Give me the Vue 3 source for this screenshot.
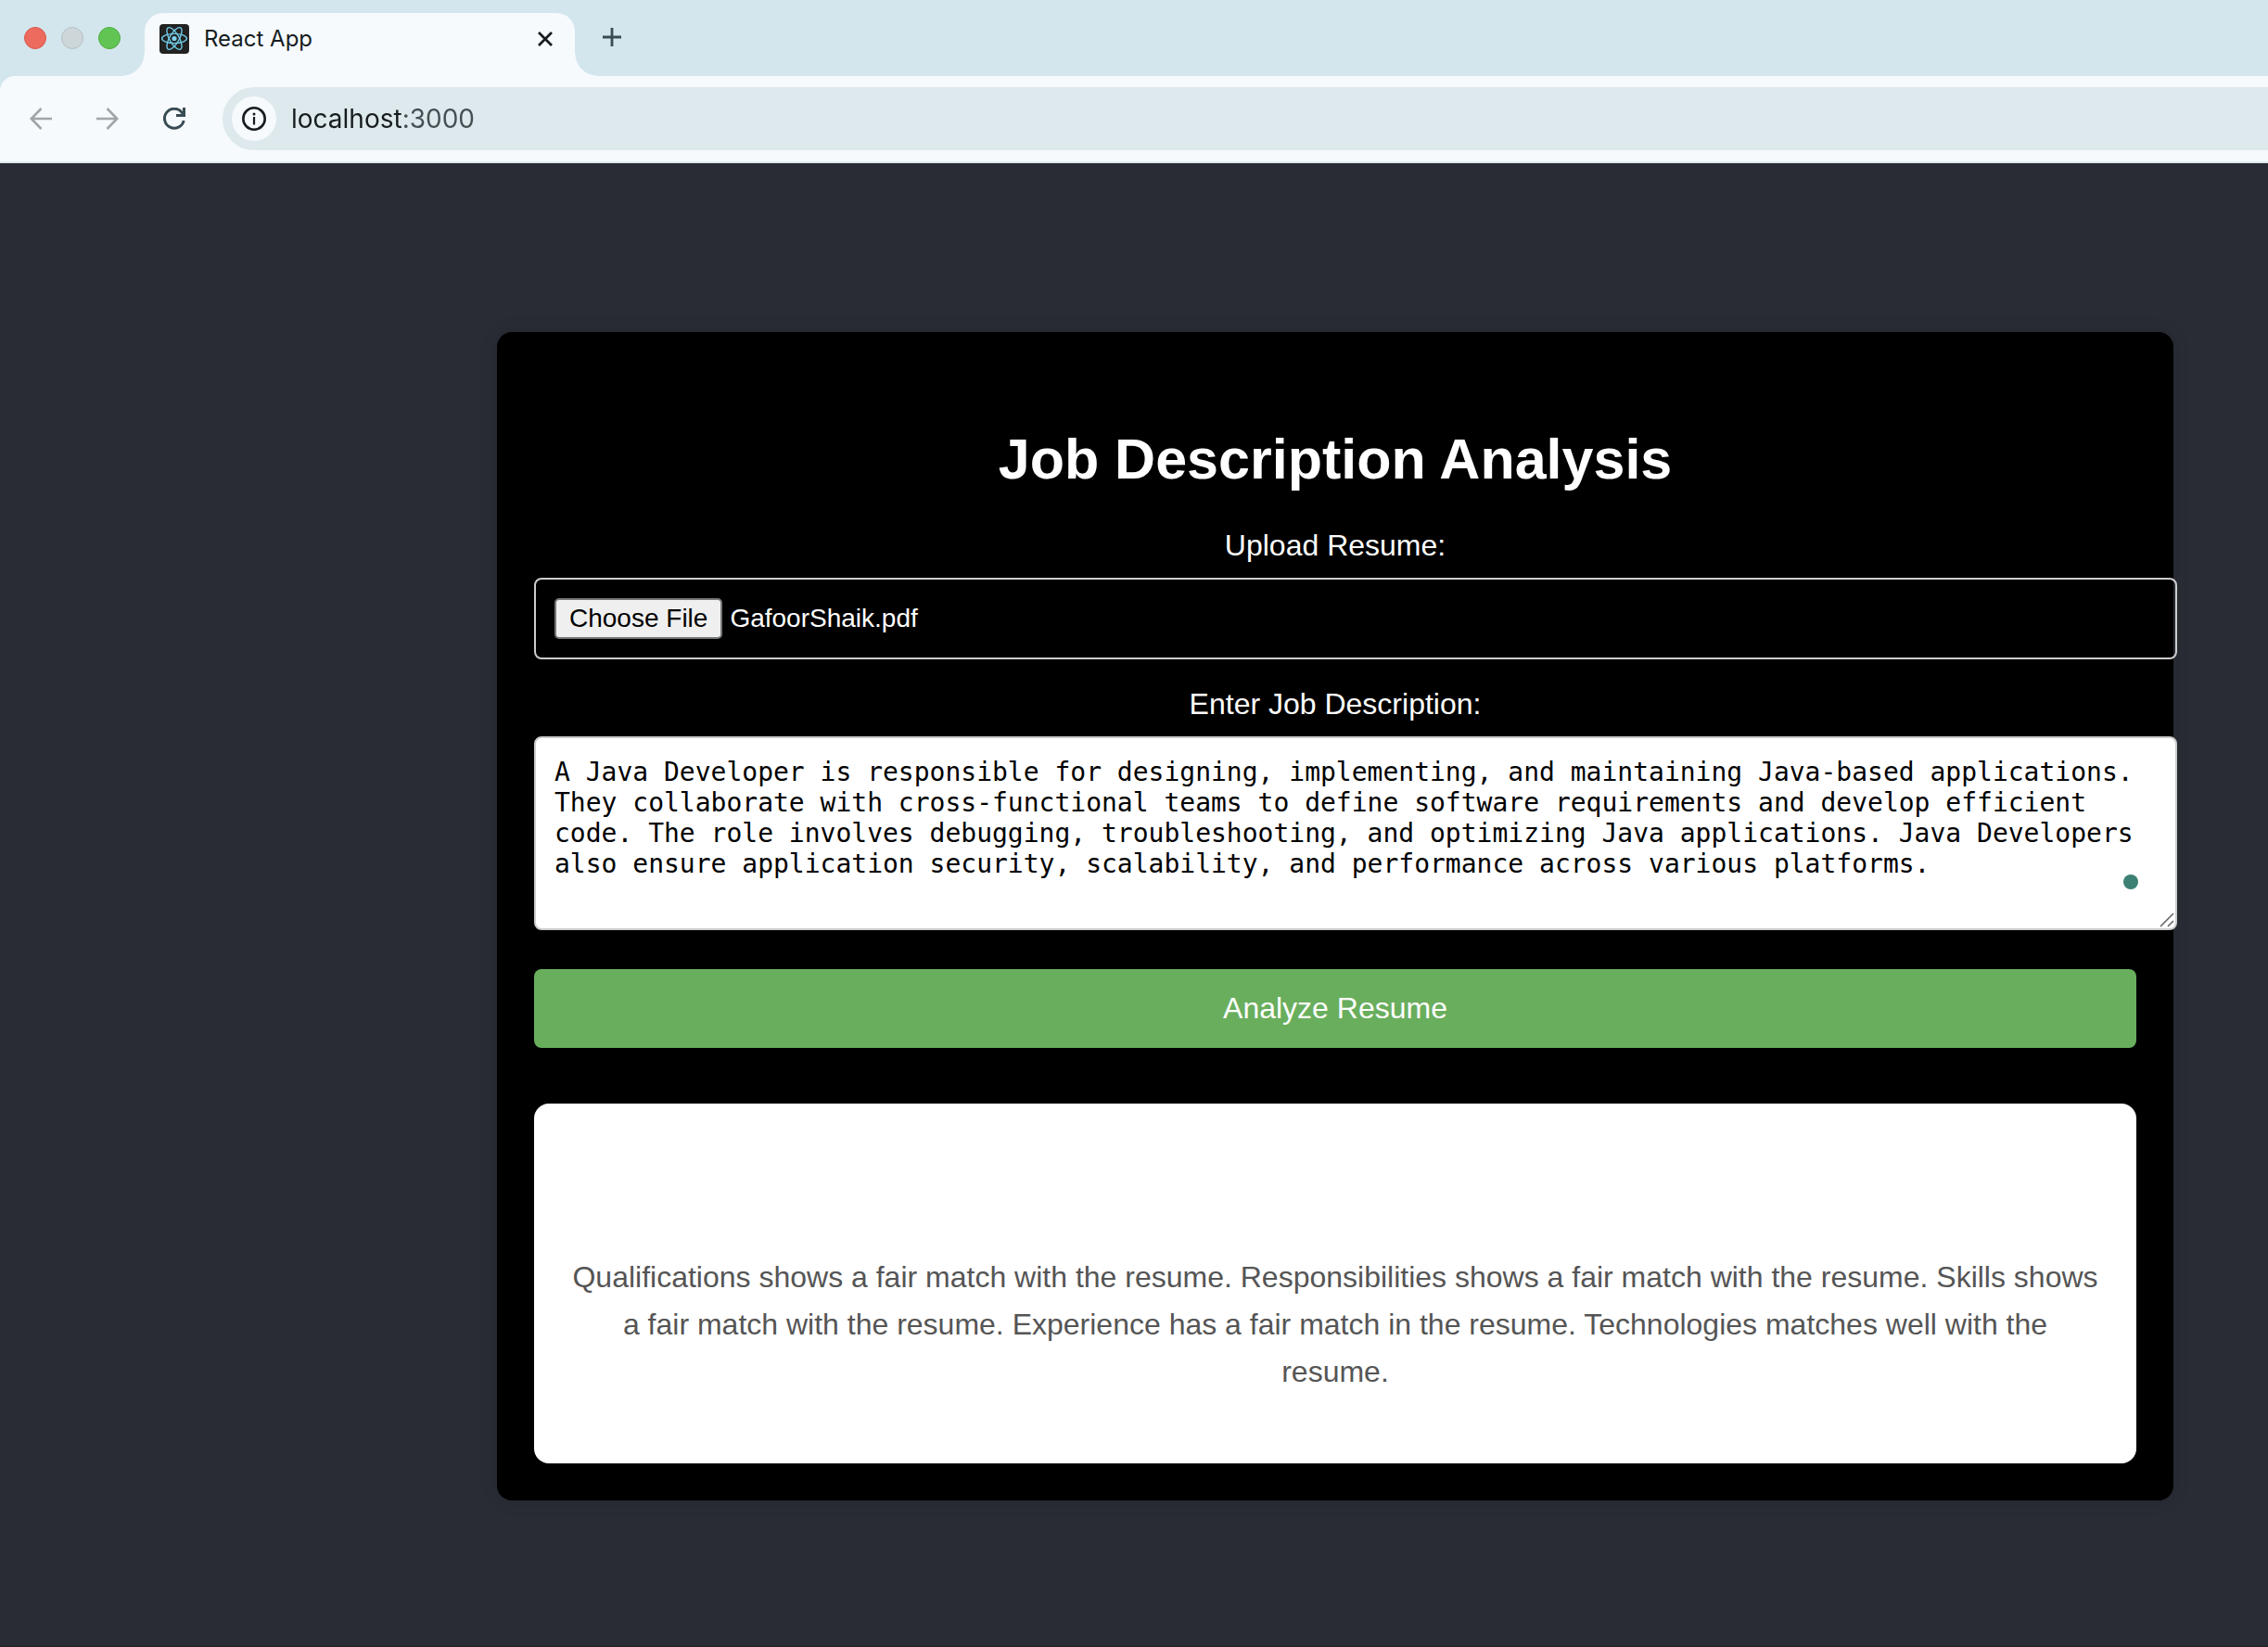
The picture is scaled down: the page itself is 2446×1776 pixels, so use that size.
<script setup>
import { onMounted, ref } from 'vue'

const address = ref('localhost:3000')
const resumeInput = ref(null)
const description = ref(
  'A Java Developer is responsible for designing, implementing, and maintaining Java-based applications. ' +
  'They collaborate with cross-functional teams to define software requirements and develop efficient code. ' +
  'The role involves debugging, troubleshooting, and optimizing Java applications. ' +
  'Java Developers also ensure application security, scalability, and performance across various platforms.'
)
const result =
  'Qualifications shows a fair match with the resume. Responsibilities shows a fair match with the resume. ' +
  'Skills shows a fair match with the resume. Experience has a fair match in the resume. ' +
  'Technologies matches well with the resume.'

// Preselect the resume so the native file control shows its name.
onMounted(() => {
  const transfer = new DataTransfer()
  transfer.items.add(new File([''], 'GafoorShaik.pdf', { type: 'application/pdf' }))
  resumeInput.value.files = transfer.files
})
</script>

<template>
  <div class="window">
    <header class="browser">
      <div class="tab-strip">
        <div class="lights">
          <button class="light red" aria-label="Close window"></button>
          <button class="light grey" aria-label="Minimize window"></button>
          <button class="light green" aria-label="Zoom window"></button>
        </div>
        <div class="tab">
          <svg class="favicon" viewBox="0 0 32 32" aria-hidden="true">
            <rect width="32" height="32" rx="4" fill="#222222" />
            <g fill="none" stroke="#6fcbe6" stroke-width="1.4">
              <ellipse cx="16" cy="15.5" rx="13.4" ry="5.1" />
              <ellipse cx="16" cy="15.5" rx="13.4" ry="5.1" transform="rotate(60 16 15.5)" />
              <ellipse cx="16" cy="15.5" rx="13.4" ry="5.1" transform="rotate(120 16 15.5)" />
            </g>
            <circle cx="16" cy="15.5" r="2.6" fill="#7fd6ee" />
          </svg>
          <span class="tab-title">React App</span>
          <button class="icon-button tab-close" aria-label="Close tab">
            <svg width="16" height="16" viewBox="0 0 16 16">
              <path d="M1 1 15 15M15 1 1 15" stroke="#161c1f" stroke-width="2.8" />
            </svg>
          </button>
        </div>
        <button class="icon-button new-tab" aria-label="New tab">
          <svg width="20" height="20" viewBox="0 0 20 20">
            <path d="M10 0V20M0 10H20" stroke="#394c54" stroke-width="2.8" />
          </svg>
        </button>
      </div>
      <nav class="toolbar">
        <button class="icon-button" aria-label="Back">
          <svg width="24" height="24" viewBox="0 0 24 24" fill="none" stroke="#a0a5a8" stroke-width="2.6">
            <path d="M24 12H2M12.5 1 1.8 12 12.5 23" />
          </svg>
        </button>
        <button class="icon-button" aria-label="Forward">
          <svg width="24" height="24" viewBox="0 0 24 24" fill="none" stroke="#a0a5a8" stroke-width="2.6">
            <path d="M0 12H22M11.5 1 22.2 12 11.5 23" />
          </svg>
        </button>
        <button class="icon-button" aria-label="Reload">
          <svg width="24" height="24" viewBox="0 0 24 24" fill="none" stroke="#394c54" stroke-width="3">
            <path d="M22.2 14A10.5 10.5 0 1 1 20.2 5.2L22.5 8M22.5 0V8.5H14" />
          </svg>
        </button>
        <div class="omnibox">
          <button class="site-info" aria-label="View site information">
            <svg width="26" height="26" viewBox="0 0 26 26">
              <circle cx="13" cy="13" r="11.7" fill="none" stroke="#161c1f" stroke-width="2.6" />
              <path d="M13 11V19.5" stroke="#161c1f" stroke-width="2.2" />
              <circle cx="13" cy="7.9" r="1.5" fill="#161c1f" />
            </svg>
          </button>
          <input v-model="address" class="address" type="text" aria-label="Address" spellcheck="false" />
        </div>
      </nav>
    </header>

    <main class="page">
      <section class="card">
        <h1>Job Description Analysis</h1>
        <form @submit.prevent>
          <label for="resume">Upload Resume:</label>
          <input id="resume" ref="resumeInput" class="field" type="file" />
          <label for="description">Enter Job Description:</label>
          <div class="description">
            <textarea id="description" v-model="description" class="field" rows="5" spellcheck="false"></textarea>
            <span class="status-dot"></span>
            <svg class="grip" width="16" height="16" viewBox="0 0 16 16" aria-hidden="true">
              <path d="M1 15 15 1M9 15 15 9" stroke="#5f5f63" stroke-width="1.5" />
            </svg>
          </div>
          <button class="analyze" type="submit">Analyze Resume</button>
        </form>
        <div class="result">
          <p>{{ result }}</p>
        </div>
      </section>
    </main>
  </div>
</template>

<style>
body {
  margin: 0;
}
</style>

<style scoped>
.window {
  display: flex;
  flex-direction: column;
  min-height: 100vh;
  font-family: "Liberation Sans", Arial, sans-serif;
}

button {
  padding: 0;
  border: 0;
  background: none;
  font-family: inherit;
}

.browser {
  background: #d3e6ed;
  font-family: Inter, "Liberation Sans", sans-serif;
}

.tab-strip {
  display: flex;
  height: 82px;
  padding-left: 26px;
}

.lights {
  display: flex;
  gap: 16px;
  padding-top: 29px;
}

.light {
  box-sizing: border-box;
  width: 24px;
  height: 24px;
  border-radius: 50%;
}

.red {
  border: 1px solid #d9594c;
  background: #ed6a5e;
}

.grey {
  border: 1px solid #b4bfc3;
  background: #cdd7da;
}

.green {
  border: 1px solid #50ad3f;
  background: #61c554;
}

.tab {
  position: relative;
  display: flex;
  align-items: center;
  box-sizing: border-box;
  width: 464px;
  margin: 14px 0 0 26px;
  padding: 0 24px 12px 16px;
  border-radius: 20px 20px 0 0;
  background: #f6fafd;
}

.tab::before,
.tab::after {
  content: "";
  position: absolute;
  bottom: 0;
  width: 24px;
  height: 24px;
}

.tab::before {
  right: 100%;
  background: radial-gradient(circle at 0 0, transparent 23px, #f6fafd 24px);
}

.tab::after {
  left: 100%;
  background: radial-gradient(circle at 100% 0, transparent 23px, #f6fafd 24px);
}

.favicon {
  width: 32px;
  height: 32px;
}

.tab-title {
  flex: 1;
  margin-left: 16px;
  color: #161c1f;
  font-size: 24px;
  line-height: 32px;
}

.icon-button {
  display: flex;
  align-items: center;
  justify-content: center;
}

.new-tab {
  height: 80px;
  margin-left: 30px;
}

.toolbar {
  display: flex;
  align-items: center;
  gap: 48px;
  height: 92px;
  padding-left: 32px;
  border-bottom: 2px solid #dde8ec;
  border-top-left-radius: 16px;
  background: #f6fafd;
}

.omnibox {
  display: flex;
  flex: 1;
  align-items: center;
  box-sizing: border-box;
  height: 68px;
  margin-left: -8px;
  padding-left: 10px;
  border-radius: 34px 0 0 34px;
  background: #dee9ed;
}

.site-info {
  display: flex;
  align-items: center;
  justify-content: center;
  width: 48px;
  height: 48px;
  border-radius: 50%;
  background: #f6fafd;
}

/* The host is drawn darker than the port. */
.address {
  flex: 1;
  margin-left: 16px;
  padding: 0;
  border: 0;
  outline: 0;
  background: linear-gradient(90deg, #161c1f 120px, #454e52 120px);
  background-clip: text;
  color: transparent;
  font-family: inherit;
  font-size: 28px;
  line-height: 40px;
}

.page {
  flex: 1;
  padding: 182px 102px 80px 536px;
  border-bottom: 1px solid #2a1d2b;
  background: #292c34;
}

.card {
  padding: 40px;
  border-radius: 16px;
  background: #000000;
  box-shadow: 0 0 20px rgba(0, 0, 0, 0.1);
  color: #ffffff;
  font-size: 32px;
  line-height: 37px;
  text-align: center;
}

h1 {
  margin: 62px 0 40px;
  font-size: 61px;
  line-height: 70px;
}

form {
  display: flex;
  flex-direction: column;
}

label {
  margin-bottom: 16px;
}

/* Fields keep content-box sizing, so they run past the card's padding. */
.field {
  display: block;
  box-sizing: content-box;
  width: 100%;
  margin: 0;
  padding: 20px;
  border: 2px solid #cccccc;
  border-radius: 8px;
  font-size: 28px;
}

input.field {
  height: 44px;
  margin-bottom: 30px;
  color: #ffffff;
  font-family: inherit;
}

.field::file-selector-button {
  box-sizing: border-box;
  height: 44px;
  margin: 0 8px 0 0;
  padding: 0 14px;
  border: 2px solid #767676;
  border-radius: 5px;
  background: #efefef;
  color: #000000;
  font-family: inherit;
  font-size: 28px;
}

.description {
  position: relative;
  box-sizing: content-box;
  width: 100%;
  padding-right: 44px;
  margin-bottom: 42px;
}

textarea.field {
  overflow: hidden;
  background: #ffffff;
  color: #000000;
  font-family: "DejaVu Sans Mono", monospace;
  line-height: 33px;
  resize: none;
}

.status-dot {
  position: absolute;
  right: 42px;
  bottom: 44px;
  width: 16px;
  height: 16px;
  border-radius: 50%;
  background: #3b8073;
}

.grip {
  position: absolute;
  right: 3px;
  bottom: 3px;
}

.analyze {
  padding: 24px;
  border-radius: 8px;
  background: #69ae5d;
  color: #ffffff;
  font-size: 32px;
  line-height: 37px;
}

.result {
  margin-top: 60px;
  padding: 162px 40px 73px;
  border-radius: 16px;
  background: #ffffff;
  color: #555555;
  line-height: 51px;
}

.result p {
  margin: 0;
}
</style>
